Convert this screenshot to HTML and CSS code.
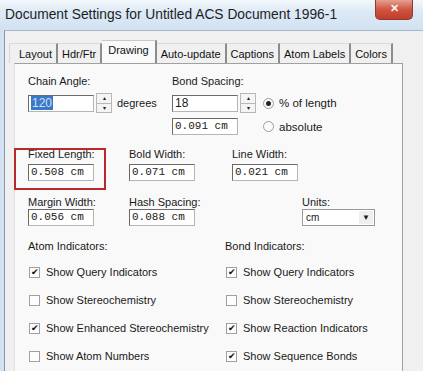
FILE: index.html
```html
<!DOCTYPE html>
<html lang="en">
<head>
    <meta charset="UTF-8">
    <title>Document Settings</title>
    <link rel="stylesheet" href="styles.css">
</head>
<body>
    <div class="window">
        <div class="titlebar">
            <div class="title">Document Settings for Untitled ACS Document 1996-1</div>
            <div class="close-btn">&#x2715;</div>
        </div>

        <div class="client">
            <div class="tabs">
                <div class="tab">Layout</div>
                <div class="tab">Hdr/Ftr</div>
                <div class="tab active">Drawing</div>
                <div class="tab">Auto-update</div>
                <div class="tab">Captions</div>
                <div class="tab">Atom Labels</div>
                <div class="tab">Colors</div>
            </div>

            <div class="panel">
                <div class="row top-row">
                    <div class="field chain">
                        <div class="label">Chain Angle:</div>
                        <div class="line">
                            <div class="input"><span class="sel">120</span></div>
                            <div class="spin"><span>&#9652;</span><span>&#9662;</span></div>
                            <span class="unit">degrees</span>
                        </div>
                    </div>
                    <div class="field bond">
                        <div class="label">Bond Spacing:</div>
                        <div class="line">
                            <div class="input">18</div>
                            <div class="spin"><span>&#9652;</span><span>&#9662;</span></div>
                            <span class="radio on"></span>
                            <span class="radio-label">% of length</span>
                        </div>
                        <div class="line second">
                            <div class="input mono">0.091 cm</div>
                            <span class="radio"></span>
                            <span class="radio-label">absolute</span>
                        </div>
                    </div>
                </div>

                <div class="row widths">
                    <div class="field w1">
                        <div class="label">Fixed Length:</div>
                        <div class="input mono">0.508 cm</div>
                    </div>
                    <div class="field w2">
                        <div class="label">Bold Width:</div>
                        <div class="input mono">0.071 cm</div>
                    </div>
                    <div class="field">
                        <div class="label">Line Width:</div>
                        <div class="input mono">0.021 cm</div>
                    </div>
                </div>

                <div class="row margins">
                    <div class="field w1">
                        <div class="label">Margin Width:</div>
                        <div class="input mono">0.056 cm</div>
                    </div>
                    <div class="field w3">
                        <div class="label">Hash Spacing:</div>
                        <div class="input mono">0.088 cm</div>
                    </div>
                    <div class="field">
                        <div class="label">Units:</div>
                        <div class="select"><span>cm</span><span class="drop">&#9660;</span></div>
                    </div>
                </div>

                <div class="row indicators">
                    <div class="col atoms">
                        <div class="heading">Atom Indicators:</div>
                        <label class="check"><span class="box on"></span>Show Query Indicators</label>
                        <label class="check"><span class="box"></span>Show Stereochemistry</label>
                        <label class="check"><span class="box on"></span>Show Enhanced Stereochemistry</label>
                        <label class="check"><span class="box"></span>Show Atom Numbers</label>
                    </div>
                    <div class="col">
                        <div class="heading">Bond Indicators:</div>
                        <label class="check"><span class="box on"></span>Show Query Indicators</label>
                        <label class="check"><span class="box"></span>Show Stereochemistry</label>
                        <label class="check"><span class="box on"></span>Show Reaction Indicators</label>
                        <label class="check"><span class="box on"></span>Show Sequence Bonds</label>
                    </div>
                </div>

                <!-- red highlight drawn over the Fixed Length field -->
                <div class="highlight"></div>
            </div>
        </div>
    </div>
</body>
</html>
```

FILE: styles.css
```css
body {
    margin: 0;
    padding: 0;
    font-family: 'Liberation Sans', Arial, sans-serif;
    background: #fff;
}

.window {
    width: 423px;
    height: 371px;
    overflow: hidden;
    background: linear-gradient(to bottom, #f4f8fc 0, #dce9f6 12px, #d2e2f2 30px);
}

.titlebar {
    height: 30px;
    display: flex;
    align-items: center;
    justify-content: space-between;
    padding-left: 5px;
}

.title {
    font-size: 13.8px;
    color: #1e1e1e;
    margin-top: -2px;
}

.close-btn {
    width: 36px;
    height: 19px;
    margin-right: 10px;
    margin-top: -11px;
    border: 1px solid #8c3a32;
    border-top: none;
    border-radius: 0 0 5px 5px;
    background: linear-gradient(to bottom, #e4a092, #cf5540 50%, #c23c2a);
    color: #f4f4f4;
    font-size: 11px;
    font-weight: bold;
    text-align: center;
    line-height: 17px;
}

.client {
    margin-left: 4px;
    height: 341px;
    background: #f0f0f0;
    border-left: 1px solid #8a96a4;
    border-top: 1px solid #a8b8c8;
    padding-top: 11px;
}

.tabs {
    display: flex;
    padding-left: 4px;
    height: 21px;
    align-items: flex-end;
    font-size: 11px;
    color: #111;
    white-space: nowrap;
}

.tab {
    height: 19px;
    line-height: 20px;
    padding: 0 4px;
    border-top: 1px solid #dadada;
    border-right: 2px solid #8c8c8c;
    background: #f0f0f0;
}

.tab:first-child {
    border-left: 1px solid #d8d8d8;
    padding-left: 9px;
}

.tab.active {
    height: 23px;
    line-height: 18px;
    padding: 0 6px;
    margin-bottom: -1px;
    background: #f9f9f9;
    border-top: 1px solid #c8c8c8;
    position: relative;
}

.panel {
    position: relative;
    margin-left: 9px;
    width: 389px;
    height: 320px;
    background: #f9f9f9;
    border: 1px solid #a0a0a0;
    border-left-color: #e0e0e0;
    border-bottom: none;
    padding-left: 13px;
    box-sizing: border-box;
    font-size: 11px;
    color: #1a1a1a;
}

.row {
    display: flex;
}

.label {
    height: 14px;
    line-height: 14px;
}

.line {
    display: flex;
    align-items: center;
}

.input {
    width: 62px;
    height: 15px;
    line-height: 15px;
    padding-left: 2px;
    background: #fff;
    border: 1px solid #b5b5b5;
    border-top-color: #6a6a6a;
    border-left-color: #6a6a6a;
    font-size: 12px;
}

.mono {
    font-family: 'Liberation Mono', monospace;
    font-size: 11px;
}

.sel {
    background: #3a78c8;
    color: #cfe0f4;
    padding: 0 1px;
}

.spin {
    width: 14px;
    height: 18px;
    margin-left: 2px;
    display: flex;
    flex-direction: column;
    border: 1px solid #b8b8b8;
    background: #f4f4f4;
}

.spin span {
    flex: 1;
    font-size: 6px;
    line-height: 8px;
    text-align: center;
    color: #222;
}

.spin span:first-child {
    border-bottom: 1px solid #b8b8b8;
}

.unit {
    margin-left: 5px;
}

.top-row {
    padding-top: 10px;
    height: 73px;
}

.top-row .label {
    margin-bottom: 5px;
}

.chain {
    width: 144px;
}

.bond .line.second {
    margin-top: 5px;
}

.bond .line.second .input {
    margin-right: 18px;
}

.radio {
    width: 11px;
    height: 11px;
    margin-left: 7px;
    margin-right: 5px;
    border-radius: 50%;
    border: 1px solid #9c9c9c;
    background: #fbfbfb;
    box-sizing: border-box;
    display: inline-flex;
    align-items: center;
    justify-content: center;
}

.radio.on::after {
    content: "";
    width: 5px;
    height: 5px;
    border-radius: 50%;
    background: #222;
}

.radio-label {
    font-size: 11.5px;
}

.widths {
    height: 48px;
}

.widths .label {
    margin-bottom: 3px;
}

.w1 {
    width: 101px;
}

.w2 {
    width: 103px;
}

.w3 {
    width: 173px;
}

.margins {
    height: 44px;
}

.select {
    width: 68px;
    height: 15px;
    display: flex;
    justify-content: space-between;
    align-items: center;
    padding-left: 3px;
    background: #fff;
    border: 1px solid #9a9a9a;
    font-size: 10px;
}

.drop {
    width: 14px;
    height: 13px;
    margin-right: 1px;
    font-size: 8px;
    text-align: center;
    line-height: 13px;
    background: #efefef;
}

.col {
    display: flex;
    flex-direction: column;
}

.atoms {
    width: 197px;
}

.heading {
    height: 14px;
    line-height: 14px;
    margin-bottom: 5px;
}

.check {
    display: flex;
    align-items: center;
    height: 28px;
}

.box {
    width: 11px;
    height: 11px;
    margin-left: 1px;
    margin-right: 6px;
    border: 1px solid #a0a0a0;
    background: #fdfdfd;
    box-sizing: border-box;
    display: inline-flex;
    align-items: center;
    justify-content: center;
}

.box.on::after {
    content: "\2714";
    font-size: 9px;
    line-height: 9px;
    color: #111;
}

.highlight {
    position: absolute;
    left: -1px;
    top: 84px;
    width: 88px;
    height: 38px;
    border: 2px solid #b82a2a;
}
```
